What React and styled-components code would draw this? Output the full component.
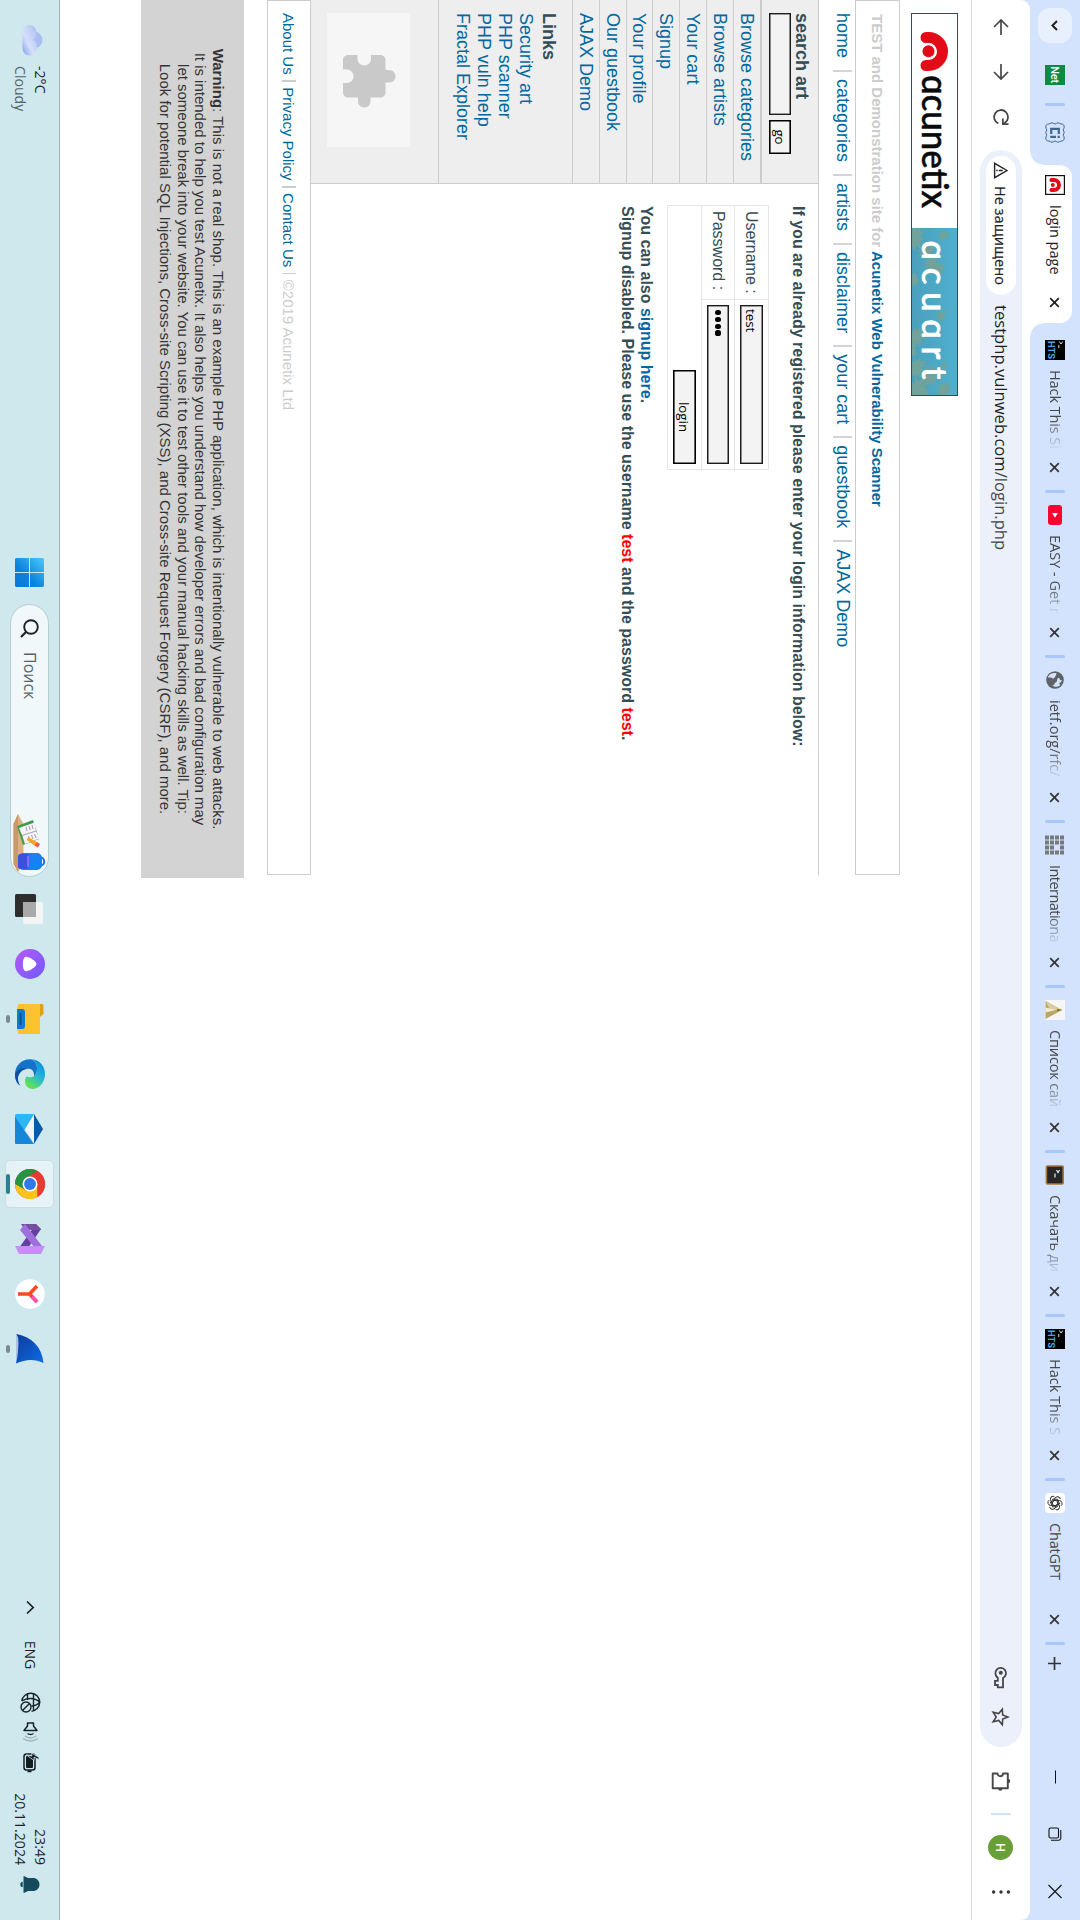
import React from "react";
import styled, { createGlobalStyle, css } from "styled-components";

const ui = `"Open Sans", "Noto Sans", sans-serif`;
const arial = `"Liberation Sans", Arial, sans-serif`;

const Global = createGlobalStyle`
  html, body { margin: 0; padding: 0; background: #fff; }
  * { box-sizing: border-box; }
  svg { display: block; flex: none; }
`;

const Viewport = styled.div`
  width: 1080px;
  height: 1920px;
  overflow: hidden;
`;

/* The desktop is a landscape screen turned a quarter clockwise. */
const Screen = styled.div`
  width: 1920px;
  height: 1080px;
  display: flex;
  flex-direction: column;
  transform-origin: 0 0;
  transform: translateX(1080px) rotate(90deg);
  background: #fff;
  font-family: ${ui};
  color: #1f1f1f;
`;

/* ---------- Browser: tab strip ---------- */

const TabStrip = styled.div`
  height: 50px;
  flex: none;
  display: flex;
  align-items: center;
  background: #d3e3fd;
`;
const TabSearch = styled.div`
  width: 35px;
  height: 34px;
  margin-left: 8px;
  border-radius: 12px;
  background: #e9f0fd;
  display: grid;
  place-items: center;
`;
const PinnedTab = styled.div`
  width: 20px;
  height: 20px;
  margin-left: ${(p) => p.$gap}px;
`;
const Separator = styled.div`
  width: 3px;
  height: 20px;
  flex: none;
  margin-left: ${(p) => p.$gap || 0}px;
  border-radius: 2px;
  background: #a8c7fa;
`;
const Favicon = styled.div`
  width: 20px;
  height: 20px;
  flex: none;
  display: grid;
  place-items: center;
`;
const TabTitle = styled.div`
  flex: 1;
  margin: 0 12px 0 10px;
  overflow: hidden;
  white-space: pre;
  font-size: 14.5px;
  line-height: 24px;
  letter-spacing: ${(p) => p.$track || 0}px;
  color: ${(p) => (p.$active ? "#1f1f1f" : "#474747")};
  ${(p) =>
    p.$fade &&
    css`
      mask-image: linear-gradient(90deg, #000 60%, transparent 100%);
    `}
`;
const ActiveTab = styled.div`
  width: 158px;
  height: 42px;
  margin: 8px 0 0 23px;
  padding: 0 14px 8px 10px;
  display: flex;
  align-items: center;
  position: relative;
  background: #fff;
  border-radius: 12px 12px 0 0;
  &::before,
  &::after {
    content: "";
    position: absolute;
    bottom: 0;
    width: 14px;
    height: 14px;
  }
  &::before {
    left: -14px;
    background: radial-gradient(circle at 0 0, transparent 13.5px, #fff 14px);
  }
  &::after {
    right: -14px;
    background: radial-gradient(circle at 100% 0, transparent 13.5px, #fff 14px);
  }
`;
const Tab = styled.div`
  width: ${(p) => p.$width}px;
  height: 42px;
  padding-left: 12px;
  display: flex;
  align-items: center;
  flex: none;
`;
const Tabs = styled.div`
  display: flex;
  margin-left: 5px;
`;
const TabClose = styled.div`
  width: 11px;
  height: 11px;
  flex: none;
  margin-right: ${(p) => p.$after || 0}px;
`;
const NewTab = styled.div`
  margin-left: 11px;
`;
const WindowButtons = styled.div`
  margin-left: auto;
  margin-right: 21px;
  display: flex;
  align-items: center;
  gap: 43px;
`;

/* ---------- Browser: toolbar ---------- */

const ToolbarBack = styled.div`
  flex: none;
  background: #d3e3fd;
`;
const Toolbar = styled.div`
  height: 59px;
  display: flex;
  align-items: center;
  padding-left: 17px;
  background: #fff;
  border-bottom: 1px solid #dcdde0;
  border-radius: 9px 9px 0 0;
`;
const NavButtons = styled.div`
  display: flex;
  gap: 25px;
`;
const AddressBar = styled.div`
  width: 1597px;
  height: 42px;
  margin-left: 23px;
  padding: 0 20px 0 6px;
  display: flex;
  align-items: center;
  border-radius: 21px;
  background: #ebf0fa;
`;
const SecurityChip = styled.div`
  width: 139px;
  height: 30px;
  padding-left: 6px;
  display: flex;
  align-items: center;
  gap: 7px;
  border-radius: 15px;
  background: #fff;
  font-size: 14.5px;
  font-weight: 500;
  -webkit-text-stroke: 0.2px #1f1f1f;
  white-space: pre;
`;
const Url = styled.div`
  flex: 1;
  margin-left: 10px;
  font-size: 16.6px;
  line-height: 24px;
  color: #1f1f1f;
  span {
    color: #474747;
  }
`;
const AddressIcons = styled.div`
  display: flex;
  align-items: center;
  gap: 18px;
`;
const ToolbarSep = styled.div`
  width: 2px;
  height: 20px;
  margin: 0 20px 0 20px;
  background: #cfe0fb;
`;
const ExtensionsSlot = styled.div`
  margin-left: 24px;
`;
const Avatar = styled.div`
  width: 25px;
  height: 25px;
  border-radius: 50%;
  background: #689f38;
  color: #fff;
  font: 500 12.5px/25px Roboto, sans-serif;
  text-align: center;
`;
const MenuSlot = styled.div`
  margin-left: 30px;
`;

/* ---------- Web page ---------- */

const Page = styled.main`
  height: 911px;
  flex: none;
  display: flex;
  flex-direction: column;
  background: #fff;
  font-family: ${arial};
  color: #334d55;
`;
const Logo = styled.div`
  margin: 13px 0 11px 13px;
  height: 47px;
  flex: none;
`;
const Masthead = styled.h1`
  width: 875px;
  height: 45px;
  margin: 0;
  padding-left: 13px;
  flex: none;
  border: 1px solid #ccc;
  font-size: 15px;
  line-height: 43px;
  font-weight: 700;
  color: #ccc;
  white-space: pre;
`;
const Link = styled.a`
  color: #0068a0;
  text-decoration: none;
`;
const GlobalNav = styled.nav`
  height: 36px;
  padding: 0 0 11px 13px;
  flex: none;
  display: flex;
  align-items: center;
  font-size: 18px;
  line-height: 25px;
  white-space: pre;
`;
const NavItem = styled.div`
  display: flex;
  align-items: center;
  &:not(:last-child)::after {
    content: "";
    width: 2px;
    height: 19px;
    margin: 0 7px 0 12px;
    background: #d2d4d8;
  }
`;
const Columns = styled.div`
  width: 875px;
  height: 508px;
  flex: none;
  display: flex;
  border-top: 1px solid #ccc;
`;
const Sidebar = styled.aside`
  width: 184px;
  flex: none;
  border-right: 1px solid #ccc;
  background: #eee;
  font-size: 18px;
  white-space: pre;
`;
const SearchBlock = styled.div`
  height: 58px;
  padding: 5px 0 0 13px;
  border-bottom: 2px solid #ccc;
`;
const SideTitle = styled.h3`
  margin: 0;
  font-size: 18px;
  line-height: 22px;
  font-weight: 700;
`;
const SearchRow = styled.div`
  display: flex;
  gap: 5px;
`;
const Field = styled.div`
  width: ${(p) => p.$width}px;
  height: ${(p) => p.$height}px;
  padding-left: ${(p) => (p.$center ? 0 : 3)}px;
  display: flex;
  align-items: center;
  justify-content: ${(p) => (p.$center ? "center" : "flex-start")};
  border: 1px solid ${(p) => (p.$center ? "#000" : "#1c1c1c")};
  box-shadow: inset 0 0 0 0.6px ${(p) => (p.$center ? "#000" : "#444")};
  background: #f3f3f3;
  color: #000;
  font: 13.3px/18px ${ui};
`;
const SideItem = styled.div`
  height: 26.9px;
  padding-left: 13px;
  border-bottom: 1px solid #ccc;
  line-height: 26px;
`;
const LinksBlock = styled.div`
  height: 133.7px;
  padding: 12px 0 0 13px;
  border-bottom: 1px solid #ccc;
  line-height: 21px;
`;
const LinksTitle = styled(SideTitle)`
  margin-bottom: 2px;
`;
const PluginBox = styled.div`
  width: 134px;
  height: 83px;
  margin: 28px 0 0 13px;
  padding-top: 1px;
  display: grid;
  place-items: center;
  background: #f6f6f6;
`;
const Main = styled.section`
  padding-left: 22px;
  white-space: pre;
`;
const Story = styled.div`
  font-size: 16px;
  font-weight: 700;
  line-height: ${(p) => p.$line}px;
`;
const LoginForm = styled.div`
  width: 265px;
  height: 102px;
  margin: 9px 0 11px -1px;
  display: grid;
  grid-template-columns: 94px 171px;
  grid-template-rows: 34px 33px 35px;
  border: 1px solid #e6e6e6;
  font-size: 16px;
`;
const Cell = styled.div`
  grid-column: ${(p) => (p.$wide ? "1 / 3" : "auto")};
  display: flex;
  align-items: center;
  justify-content: ${(p) => (p.$wide ? "flex-end" : "flex-start")};
  padding: ${(p) => (p.$wide ? "0 7px 2px 0" : "0 0 0 5px")};
  border-bottom: ${(p) => (p.$wide ? 0 : 1)}px solid #e6e6e6;
  border-right: ${(p) => (p.$label ? 1 : 0)}px solid #e6e6e6;
`;
const Dots = styled.div`
  display: flex;
  gap: 1.6px;
  padding-left: 1px;
  i {
    width: 5.2px;
    height: 5.2px;
    border-radius: 50%;
    background: #000;
  }
`;
const Red = styled.span`
  color: #f00;
`;
const SiteInfo = styled.footer`
  width: 875px;
  height: 44px;
  padding-left: 12px;
  flex: none;
  display: flex;
  align-items: center;
  border: 1px solid #ccc;
  font-size: 15px;
  color: #ccc;
  white-space: pre;
`;
const InfoSep = styled.div`
  width: 1.5px;
  height: 14px;
  margin: 0 5.5px;
  background: #ccc;
`;
const Warning = styled.div`
  width: 878px;
  height: 103px;
  margin-top: 23px;
  padding-top: 17px;
  flex: none;
  background: #d3d3d3;
  color: #333;
  font-size: 15px;
  line-height: 17.5px;
  text-align: center;
  white-space: pre;
`;
const WarningLine = styled.div`
  letter-spacing: ${(p) => p.$track || 0}px;
`;

/* ---------- Taskbar ---------- */

const Taskbar = styled.footer`
  height: 60px;
  flex: none;
  display: flex;
  align-items: center;
  background: #cfe8ee;
  box-shadow: inset 0 1px #9fb5ba;
`;
const Weather = styled.div`
  width: 558px;
  padding: 0 0 1px 25px;
  display: flex;
  align-items: center;
  gap: 10px;
  white-space: pre;
  font-size: 14.1px;
  line-height: 20px;
  svg {
    margin-bottom: 4px;
  }
  div div:last-child {
    color: #566468;
  }
`;
const SearchPill = styled.div`
  width: 273px;
  height: 39px;
  margin: 0 4px 0 17px;
  padding: 0 4px 0 14px;
  display: flex;
  align-items: center;
  border: 1px solid #b4cdd3;
  border-radius: 20px;
  background: #f0f8fa;
  font-size: 16px;
  color: #5a6265;
`;
const SearchLabel = styled.div`
  flex: 1;
  margin-left: 14px;
`;
const AppSlot = styled.div`
  width: 55px;
  height: 60px;
  display: flex;
  align-items: center;
  justify-content: center;
  position: relative;
  &::after {
    content: "";
    position: absolute;
    bottom: 6px;
    width: ${(p) => (p.$state === "active" ? 20 : p.$state === "open" ? 8 : 0)}px;
    height: 4px;
    border-radius: 2px;
    background: ${(p) => (p.$state === "active" ? "#25818d" : "#788b8f")};
  }
`;
const AppPlate = styled.div`
  width: 48px;
  height: 49px;
  display: grid;
  place-items: center;
  border-radius: 5px;
  background: ${(p) => (p.$on ? "#e5f3f7" : "transparent")};
  border: 1px solid ${(p) => (p.$on ? "#c9dde2" : "transparent")};
`;
const Tray = styled.div`
  margin-left: auto;
  padding: 0 27px 1px 0;
  display: flex;
  align-items: center;
  font-size: 14px;
`;
const TrayItem = styled.div`
  margin-left: ${(p) => p.$gap}px;
`;
const Clock = styled.div`
  margin-left: 20px;
  margin-right: 11px;
  text-align: right;
  line-height: 20px;
  font-size: 14.1px;
`;

/* ---------- Icons ---------- */

const Close = ({ color = "#333" }) => (
  <svg width="11" height="11" viewBox="0 0 11 11">
    <path d="M1.2 1.2 9.8 9.8M9.8 1.2 1.2 9.8" stroke={color} strokeWidth="1.7" />
  </svg>
);
const AcuFav = () => (
  <svg width="20" height="20" viewBox="0 0 20 20">
    <rect x=".6" y=".6" width="18.8" height="18.8" fill="#fff" stroke="#111" strokeWidth="1.2" />
    <path d="M5 13.6V11a5 5 0 0 1 10 0v2.6" fill="none" stroke="#e30b17" strokeWidth="3.9" strokeLinecap="round" />
    <circle cx="10" cy="12.2" r="2" fill="#e30b17" />
  </svg>
);
const HtsFav = () => (
  <svg width="20" height="20" viewBox="0 0 20 20">
    <rect width="20" height="20" fill="#000" />
    <path d="M1.5 2.2 4 4 1.5 5.6M5 6.2h3" fill="none" stroke="#ddd" strokeWidth="1" />
    <text x="1" y="16.8" fontSize="9.4" fontWeight="700" fontFamily="Roboto, sans-serif" textLength="18" fill="#4aa8e8">HTS</text>
  </svg>
);
const YtFav = () => (
  <svg width="20" height="20" viewBox="0 0 20 20">
    <rect y="3" width="20" height="14" rx="3" fill="#ff0033" />
    <path d="M8 7.2 12.8 10 8 12.8z" fill="#fff" />
  </svg>
);
const GlobeFav = () => (
  <svg width="20" height="20" viewBox="0 0 20 20">
    <circle cx="10" cy="10" r="8.8" fill="#5f6368" />
    <path d="M3 8.500c2.400.2 4 1.500 5.200 2.600.8.800.3 2-.7 2.300v3.800C4.800 16.200 2.600 13.500 3 8.500zM10.200 3c.2 1.600-.4 2.300-2 2.600-.6 1.400 0 2 1.400 2.200 2 .2 3 .6 3.200 2.400 1.800.2 2.600.8 2.800 2.600 1.800-2.600 1.600-6-.6-8.200-.6 1-1.600 1.300-2.300.7-.6-.6-.4-1.500-2.500-2.300z" fill="#d3e3fd" />
  </svg>
);
const GridFav = () => (
  <svg width="20" height="20" viewBox="0 0 20 20">
    {[0, 1, 2, 3].map((r) =>
      [0, 1, 2, 3].map((c) =>
        r === 1 && c === 2 ? null : <rect key={`${r}${c}`} x={0.5 + c * 5} y={1 + r * 5} width="4" height="4" fill="#77797c" />
      )
    )}
  </svg>
);
const ArrowFav = () => (
  <svg width="20" height="20" viewBox="0 0 20 20">
    <rect width="20" height="20" fill="#f6f6f4" />
    <path d="M10 3 1 19.500h18z" fill="#b9a566" />
    <path d="M10 3v12L1 19.500z" fill="#d9cd9b" />
    <path d="M10 9 7.500 19.500h5z" fill="#f0ead0" />
    <path d="M10 2.500 8.700 8h2.600z" fill="#8a742c" />
  </svg>
);
const TermFav = () => (
  <svg width="20" height="20" viewBox="0 0 20 20">
    <rect x="1" y="1.800" width="18" height="16.800" rx="1" fill="#262626" stroke="#a8793f" strokeWidth="1.600" />
    <path d="M5 5.500 7.500 7 5 8.500M8.500 10h4" fill="none" stroke="#eee" strokeWidth="1.200" />
  </svg>
);
const GptFav = () => (
  <svg width="20" height="20" viewBox="0 0 20 20">
    <rect width="20" height="20" rx="4" fill="#fff" />
    <g fill="none" stroke="#333" strokeWidth="1">
      {[0, 60, 120, 180, 240, 300].map((a) => (
        <path key={a} transform={`rotate(${a} 10 10)`} d="M7.500 10V5.700a3 3 0 0 1 5.300-1.700M7.500 8.500 11.200 6.400l3.400 2" />
      ))}
    </g>
  </svg>
);
const NetFav = () => (
  <svg width="20" height="20" viewBox="0 0 20 20">
    <rect width="20" height="20" fill="#0a8a43" />
    <text x="1.200" y="14.200" fontSize="11" fontFamily="Roboto, sans-serif" fontWeight="500" textLength="17" fill="#fff">Net</text>
  </svg>
);
const CiFav = () => (
  <svg width="21" height="20" viewBox="0 0 21 20">
    <g fill="none" stroke="#3f6590">
      <path d="M5 .8c-2 0-3 1-3 3 0 1.500-1.300 2-1.300 3.200S2 8.700 2 10s-1.300 1.800-1.300 3S2 14.700 2 16.200c0 2 1 3 3 3 1.500 0 2-.9 3-.9s1.500.9 2.500.9 1.500-.9 2.500-.9 1.500.9 3 .9c2 0 3-1 3-3 0-1.500 1.300-2 1.300-3.200S19 11.300 19 10s1.300-1.800 1.300-3S19 5.300 19 3.800c0-2-1-3-3-3-1.500 0-2 .9-3 .9s-1.500-.9-2.500-.9-1.500.9-2.500.9-1.500-.9-3-.9z" strokeWidth="1" />
      <path d="M12 6.200H6.800v7.600H12" strokeWidth="2.200" />
      <path d="M14.800 9v5.800M14.800 5.200v2.200" strokeWidth="2.200" />
    </g>
  </svg>
);
const Arrow = ({ flip }) => (
  <svg width="20" height="20" viewBox="0 0 20 20">
    <path
      d={flip ? "M2 10h14.500M10 3l7 7-7 7" : "M18 10H3.500M10 3 3 10l7 7"}
      fill="none" stroke="#474747" strokeWidth="1.700"
    />
  </svg>
);
const Reload = () => (
  <svg width="20" height="20" viewBox="0 0 20 20">
    <path d="M16.500 12.600A7 7 0 1 1 15.800 6L17 7.800" fill="none" stroke="#474747" strokeWidth="1.800" />
    <path d="M17.200 2.500v5.600h-5.600" fill="none" stroke="#474747" strokeWidth="1.800" />
  </svg>
);
const WarnIcon = () => (
  <svg width="17" height="16" viewBox="0 0 17 16">
    <path d="M8.500 2 1.300 14.400h14.400z" fill="none" stroke="#222" strokeWidth="1.400" />
    <path d="M8.500 6.300v4M8.500 11.300v1.500" stroke="#222" strokeWidth="1.400" />
  </svg>
);
const KeyIcon = () => (
  <svg width="23" height="15" viewBox="0 0 23 15">
    <path d="M12 5H21.300V10.200H19V13H14.800V10.200H11.700A5.300 5.300 0 1 1 12 5z" fill="none" stroke="#474747" strokeWidth="1.800" />
    <circle cx="6.800" cy="7.200" r="2" fill="#474747" />
  </svg>
);
const StarIcon = () => (
  <svg width="20" height="19" viewBox="0 0 20 19">
    <path d="M10 2 12.100 7.300l5.700.4-4.400 3.600 1.400 5.500L10 13.800l-4.800 3 1.400-5.500L2.200 7.700l5.700-.4z" fill="none" stroke="#474747" strokeWidth="1.600" />
  </svg>
);
const ExtIcon = () => (
  <svg width="22" height="22" viewBox="0 0 22 22">
    <path d="M2.500 4.200H17.200V10.500 19.300H2.500V14.500A2.500 2.500 0 0 0 2.500 9z" fill="none" stroke="#474747" strokeWidth="1.900" strokeLinejoin="round" />
    <path d="M7.800 4a2.200 2.200 0 0 1 4.400 0zM17.500 9.500a2.200 2.200 0 0 1 0 4.400z" fill="#474747" />
  </svg>
);
const DotsIcon = () => (
  <svg width="4" height="20" viewBox="0 0 4 20">
    <g fill="#333">
      <circle cx="2" cy="2.600" r="1.700" />
      <circle cx="2" cy="10" r="1.700" />
      <circle cx="2" cy="17.400" r="1.700" />
    </g>
  </svg>
);

const ragged = (x, y, s, r) => (
  <path
    transform={`translate(${x} ${y}) rotate(${r}) scale(${s})`}
    d="M0 0l3-5 1 3 4-6-1 6 5-3-2 5 6 0-4 3 5 4-6-1 2 6-5-3 0 6-4-4-2 5-1-6-5 3 2-5-6 0 4-3-5-4 6 0-2-5z"
  />
);
const AcuLogo = () => (
  <svg width="383" height="47" viewBox="0 0 383 47">
    <rect x=".500" y=".500" width="382" height="46" fill="#fff" stroke="#2f4f57" />
    <defs>
      <linearGradient id="sea" x1="0" y1="1" x2="0" y2="0">
        <stop offset="0" stopColor="#4aa0bd" />
        <stop offset="1" stopColor="#4fb0cd" />
      </linearGradient>
      <clipPath id="seaClip"><rect x="215" y="1" width="167" height="45" /></clipPath>
    </defs>
    <rect x="215" y="1" width="167" height="45" fill="url(#sea)" />
    <g clipPath="url(#seaClip)" fill="#6fa39b">
      {ragged(222, 38, 1.1, 20)}
      {ragged(224, 12, 0.5, 80)}
      {ragged(238, 27, 0.8, 50)}
      {ragged(250, 22, 0.8, 10)}
      {ragged(256, 16, 0.6, 40)}
      {ragged(264, 42, 0.6, 0)}
      {ragged(302, 14, 0.5, 30)}
      {ragged(325, 36, 0.9, 60)}
      {ragged(335, 44, 0.8, 15)}
      {ragged(352, 12, 0.35, 15)}
      {ragged(354, 36, 0.9, 35)}
      {ragged(366, 22, 1, 75)}
      {ragged(374, 34, 1.2, 5)}
      {ragged(377, 10, 0.7, 50)}
    </g>
    <rect x=".500" y=".500" width="382" height="46" fill="none" stroke="#2f4f57" />
    <path d="M24.500 32V29.500a14 14 0 0 1 28 0V32" fill="none" stroke="#e30b17" strokeWidth="11" strokeLinecap="round" />
    <circle cx="38.300" cy="29.500" r="8" fill="#fff" />
    <circle cx="38.300" cy="29.500" r="6" fill="#e30b17" />
    <text x="62" y="36" fontFamily="Lato, sans-serif" fontWeight="500" fontSize="36" textLength="133" lengthAdjust="spacingAndGlyphs" stroke="#0a0a0a" strokeWidth=".5" fill="#0a0a0a">ɑcunetix</text>
    <text x="227.500" y="36" fontFamily="Lato, sans-serif" fontWeight="500" fontSize="35" textLength="139" stroke="#fff" strokeWidth=".6" fill="#fff">ɑcuɑrt</text>
  </svg>
);

const Puzzle = () => (
  <svg width="60" height="60" viewBox="0 0 24 24">
    <path fill="#c9c9c9" d="M20.500 11H19V7c0-1.100-.9-2-2-2h-4V3.500C13 2.120 11.880 1 10.500 1S8 2.120 8 3.500V5H4c-1.100 0-1.990.9-1.990 2v3.800H3.500c1.490 0 2.700 1.210 2.700 2.700s-1.210 2.700-2.700 2.700H2V20c0 1.100.9 2 2 2h3.800v-1.500c0-1.490 1.210-2.700 2.700-2.700s2.700 1.210 2.700 2.700V22H17c1.100 0 2-.9 2-2v-4h1.500c1.380 0 2.500-1.120 2.500-2.500S21.880 11 20.500 11z" />
  </svg>
);

const Cloud = () => (
  <svg width="31" height="21" viewBox="0 0 31 21">
    <defs>
      <linearGradient id="cl" x1="0" y1="0" x2="1" y2="1">
        <stop offset="0" stopColor="#a9bdf0" />
        <stop offset=".6" stopColor="#d5e0fb" />
        <stop offset="1" stopColor="#7f9fe8" />
      </linearGradient>
    </defs>
    <circle cx="15" cy="9" r="8.500" fill="#a9bff3" />
    <path d="M7 6.500c4 0 7 2 8 4 1-3 4-5 8-4.500 4 .5 7.500 3.500 7.500 7.500S27 20.500 23 20.500H7a7 7 0 0 1 0-14z" fill="url(#cl)" />
  </svg>
);
const WinLogo = () => (
  <svg width="29" height="29" viewBox="0 0 29 29">
    <defs>
      <linearGradient id="wn" x1="0" y1="0" x2="29" y2="29" gradientUnits="userSpaceOnUse">
        <stop offset="0" stopColor="#4cc9fb" />
        <stop offset=".6" stopColor="#0a84dc" />
        <stop offset="1" stopColor="#0875d4" />
      </linearGradient>
    </defs>
    <path fill="url(#wn)" d="M1 0h13v14H0V1zM15 0h13l1 1v13H15zM0 15h14v14H1l-1-1zM15 15h14v13l-1 1H15z" />
  </svg>
);
const Magnifier = () => (
  <svg width="19" height="19" viewBox="0 0 19 19">
    <circle cx="8" cy="8" r="6.800" fill="none" stroke="#1d2326" strokeWidth="1.900" />
    <path d="m13 13 5 5" stroke="#1d2326" strokeWidth="2.200" />
  </svg>
);
const SchoolArt = () => (
  <svg width="58" height="35" viewBox="0 0 58 35">
    <path d="M0 29 10 23.500H50L58 29 50 33.500H10z" fill="#dcb283" />
    <path d="M10 33.500H50L58 29H0z" fill="#c89a68" />
    <path d="M6 14 25 8 31 24 12 30z" fill="#3f9b50" />
    <path d="M8.500 12.500 17 11 24.500 7.500 30 22 21 25 14 28z" fill="#f7f3f8" />
    <path d="M17 11 21.500 25M11 15l4-1M12 18l4-1M13 21l4-1M20 12.500l4-1.500M21 15.500l4-1.500M22 18.500l4-1.500" stroke="#8d86a8" strokeWidth=".8" />
    <path d="M23 19 28.500 9.500 32 12 26 20z" fill="#f5a623" />
    <path d="M28 10 30 7l3.500 2L31.500 12.500z" fill="#ef5a50" />
    <path d="M43 8C43 1 52 1 52 8" fill="none" stroke="#1b6fe6" strokeWidth="2" />
    <rect x="39" y="5" width="17" height="24" rx="5" fill="#1680f5" />
    <rect x="40" y="18" width="15" height="11" rx="3" fill="#3b4fe0" />
    <path d="M42 19h11" stroke="#8f7bff" strokeWidth="1.500" />
  </svg>
);
const TaskView = () => (
  <svg width="30" height="29" viewBox="0 0 30 29">
    <rect x="0" y="8" width="23" height="21" rx="1.500" fill="#2d2d2d" />
    <rect x="8" y="1" width="22" height="20" rx="1.500" fill="#f3f4f4" />
    <path d="M8 8h15v13H8z" fill="#a9a9a9" />
  </svg>
);
const Alice = () => (
  <svg width="30" height="30" viewBox="0 0 30 30">
    <defs>
      <linearGradient id="al" x1="0" y1="1" x2="1" y2="0">
        <stop offset="0" stopColor="#b958fb" />
        <stop offset="1" stopColor="#6c5cfb" />
      </linearGradient>
    </defs>
    <circle cx="15" cy="15" r="15" fill="url(#al)" />
    <path d="M15 8.500c3 0 8.500 9 7 11.500-1.500 2.800-12.500 2.800-14 0C6.500 17.500 12 8.500 15 8.500z" fill="#fff" />
  </svg>
);
const Folder = () => (
  <svg width="30" height="28" viewBox="0 0 30 28">
    <path d="M0 2q0-1.500 1.500-1.500H10L13 4H0z" fill="#e0a010" />
    <path d="M0 4h30v20.500a2 2 0 0 1-2 2H2a2 2 0 0 1-2-2z" fill="#fdc32f" />
    <path d="M5 27v-5a3 3 0 0 1 3-3h14a3 3 0 0 1 3 3v5z" fill="#1279cf" />
    <path d="M9 23.500h12" stroke="#0b4f93" strokeWidth="1.800" />
  </svg>
);
const Edge = () => (
  <svg width="30" height="30" viewBox="0 0 30 30">
    <defs>
      <linearGradient id="ed" x1="0" y1="0" x2="1" y2=".5">
        <stop offset="0" stopColor="#0c7fd8" />
        <stop offset=".55" stopColor="#20b3df" />
        <stop offset="1" stopColor="#5fe05a" />
      </linearGradient>
    </defs>
    <path d="M.3 13C1 5 7.500 0 15 0c8.500 0 15 6 15 12.500 0 5-4 7.500-8 7.500-3.500 0-5-1.300-4.500-2.500.8-1 1-2 .8-3.500C17.800 10 14 8 10 8 5.500 8 2 10 .3 13z" fill="url(#ed)" />
    <path d="M.2 14C1.500 10 5.500 8 10 8c3 0 5.500 1 7 3-6-.5-8 3.500-7 8 1 4.500 5 7.500 9 8 3 .3 5.500-.5 7.500-2C24 28.500 20 30 15 30 6.500 30-.5 23 .2 14z" fill="#1473c8" />
    <path d="M10 18.500c.5 6 6 9.500 11 8.500 2.500-.5 4.500-1.300 6-2.500C24 29 19.500 30 15 30 11 28 8 23 10 18.500z" fill="#124d99" />
  </svg>
);
const Mail = () => (
  <svg width="30" height="29" viewBox="0 0 30 29">
    <path d="M0 10 15 1l15 9z" fill="#0a5aa8" />
    <path d="M1 10h28L15 19z" fill="#f4f4f4" />
    <path d="M0 10v17.500Q0 29 1.500 29h27Q30 29 30 27.500L15 19z" fill="#2cb7f3" />
    <path d="M30 10v17.500Q30 29 28.500 29H3z" fill="#1587d8" />
  </svg>
);
const Chrome = () => (
  <svg width="30" height="30" viewBox="0 0 48 48">
    <circle cx="24" cy="24" r="24" fill="#e53b30" />
    <path d="M3.200 12A24 24 0 0 0 24 48L34.400 30 24 24 13.600 30z" fill="#259443" />
    <path d="M24 48A24 24 0 0 0 44.800 12H24l10.400 18z" fill="#fcc31c" />
    <path d="M3.200 12 13.600 30 24 12h20.800A24 24 0 0 0 3.200 12z" fill="#e53b30" />
    <circle cx="24" cy="24" r="12" fill="#fff" />
    <circle cx="24" cy="24" r="9.500" fill="#3079ea" />
  </svg>
);
const VisualStudio = () => (
  <svg width="30" height="30" viewBox="0 0 30 30">
    <path d="M0 9 5 4 30 21 24 26z" fill="#643f9f" />
    <path d="M0 9 6 4v16L0 24z" fill="#74509f" />
    <path d="M0 20 22 3l2 7L6 25z" fill="#9f6fdb" />
    <path d="M22 0 30 4v22l-8 4z" fill="#c88cf5" />
  </svg>
);
const Yandex = () => (
  <svg width="30" height="30" viewBox="0 0 30 30">
    <circle cx="15" cy="15" r="14.800" fill="#fff" />
    <path d="M7 8l8 7.500L23 8M15 15v12" fill="none" stroke="#fb4a20" strokeWidth="3.600" />
    <path d="M17.500 13 23 8" stroke="#ff4fb0" strokeWidth="3.600" />
  </svg>
);
const Wireshark = () => (
  <svg width="30" height="29" viewBox="0 0 30 29">
    <defs>
      <linearGradient id="ws" x1="0" y1="1" x2="1" y2="0">
        <stop offset="0" stopColor="#0b3d9c" />
        <stop offset="1" stopColor="#0f6ae4" />
      </linearGradient>
    </defs>
    <path d="M0 27.500C3 12 13 2 29 .500c-4 8-4.500 17 .5 27.500z" fill="url(#ws)" />
    <path d="M0 28c3-3 6-2 9-2.500 7 .5 13 .5 20.500 2.500z" fill="#a9c4e6" />
  </svg>
);
const Caret = ({ up }) => (
  <svg width="15" height="9" viewBox="0 0 15 9">
    <path d={up ? "M1.500 8 7.500 1.800 13.500 8" : "M3 2l4.500 4.500L12 2"} fill="none" stroke="#1f1f1f" strokeWidth={up ? 1.7 : 2} />
  </svg>
);
const NoNet = () => (
  <svg width="21" height="21" viewBox="0 0 21 21" fill="none" stroke="#16242a" strokeWidth="1.400">
    <path d="M9 19.200A9 9 0 1 1 19.200 9.500M1.500 7.500h17.500M1.500 13.500H8M9 19C5.500 14 5.500 6 10.300 1.200 13 4 14 6.500 14 9.500" />
    <circle cx="15" cy="15" r="5" />
    <path d="m11.500 11.500 7 7" />
  </svg>
);
const Speaker = () => (
  <svg width="20" height="19" viewBox="0 0 20 19" fill="none">
    <path d="M1 6.500h3L8.500 3v13L4 12.500H1z" stroke="#16242a" strokeWidth="1.500" strokeLinejoin="round" />
    <path d="M11.500 6.500q2 3 0 6" stroke="#16242a" strokeWidth="1.400" />
    <path d="M14 4q4 5.500 0 11M16.500 2q5 7.500 0 15" stroke="#9db5ba" strokeWidth="1.300" />
  </svg>
);
const Battery = () => (
  <svg width="21" height="18" viewBox="0 0 21 18">
    <rect x="2" y="4" width="16" height="11" rx="2.500" fill="none" stroke="#111c20" strokeWidth="1.500" />
    <rect x="4" y="6" width="12" height="7" rx="1" fill="#111c20" />
    <path d="M18.500 7.500h1.800v4h-1.800z" fill="#111c20" />
    <path d="M5.500 0 1 7.200h3L3 12.500 8.500 5H5.200L7.500 0z" fill="#111c20" stroke="#cfe8ee" strokeWidth=".8" />
  </svg>
);
const Bell = () => (
  <svg width="17" height="20" viewBox="0 0 17 20">
    <path d="M8.500.5C4.500.5 2 3.500 2 7v5L.300 15.500V16.500H16.700V15.500L15 12V7C15 3.500 12.500.5 8.500.5zM5.800 17.300h5.400a2.700 2.400 0 0 1-5.400 0z" fill="#144a5c" />
  </svg>
);

/* ---------- Data ---------- */

const tabs = [
  { icon: <HtsFav />, title: "Hack This Si", track: -0.1 },
  { icon: <YtFav />, title: "EASY - Get r" },
  { icon: <GlobeFav />, title: "ietf.org/rfc/" },
  { icon: <GridFav />, title: "Internationa", track: -0.55 },
  { icon: <ArrowFav />, title: "Список сай", track: -0.15 },
  { icon: <TermFav />, title: "Скачать ди", track: -0.15 },
  { icon: <HtsFav />, title: "Hack This S" },
  { icon: <GptFav />, title: "ChatGPT", full: true, track: -0.2 },
];
const navLinks = ["home", "categories", "artists", "disclaimer", "your cart", "guestbook", "AJAX Demo"];
const sideLinks = ["Browse categories", "Browse artists", "Your cart", "Signup", "Your profile", "Our guestbook", "AJAX Demo"];
const outLinks = ["Security art", "PHP scanner", "PHP vuln help", "Fractal Explorer"];
const apps = [
  { icon: <TaskView /> },
  { icon: <Alice /> },
  { icon: <Folder />, state: "open" },
  { icon: <Edge /> },
  { icon: <Mail /> },
  { icon: <Chrome />, state: "active" },
  { icon: <VisualStudio /> },
  { icon: <Yandex /> },
  { icon: <Wireshark />, state: "open" },
];

export default function App() {
  return (
    <>
      <Global />
      <Viewport>
        <Screen>
          <TabStrip>
            <TabSearch><Caret /></TabSearch>
            <PinnedTab $gap={22}><NetFav /></PinnedTab>
            <Separator $gap={18} />
            <PinnedTab $gap={16}><CiFav /></PinnedTab>
            <ActiveTab>
              <Favicon><AcuFav /></Favicon>
              <TabTitle $active>login page</TabTitle>
              <TabClose $after={1}><Close color="#1f1f1f" /></TabClose>
            </ActiveTab>
            <Tabs>
              {tabs.map((t, i) => (
                <Tab key={i} $width={i < 5 ? 165 : 164}>
                  <Favicon>{t.icon}</Favicon>
                  <TabTitle $fade={!t.full} $track={t.track}>{t.title}</TabTitle>
                  <TabClose $after={17}><Close /></TabClose>
                  <Separator />
                </Tab>
              ))}
            </Tabs>
            <NewTab>
              <svg width="15" height="15" viewBox="0 0 15 15">
                <path d="M7.500 1v13M1 7.500h13" stroke="#333" strokeWidth="1.700" />
              </svg>
            </NewTab>
            <WindowButtons>
              <svg width="14" height="14" viewBox="0 0 14 14"><path d="M.500 6.500h13" stroke="#111" /></svg>
              <svg width="14" height="14" viewBox="0 0 14 14" fill="none" stroke="#111" strokeWidth="1.100">
                <rect x="1" y="3.500" width="10" height="9.500" rx="1.500" />
                <path d="M3 1.200H11a2.200 2.200 0 0 1 2.200 2.200V11" />
              </svg>
              <svg width="15" height="14" viewBox="0 0 15 14"><path d="M1 .500 14 13.500M14 .500 1 13.500" stroke="#111" strokeWidth="1.100" /></svg>
            </WindowButtons>
          </TabStrip>

          <ToolbarBack>
            <Toolbar>
              <NavButtons><Arrow /><Arrow flip /><Reload /></NavButtons>
              <AddressBar>
                <SecurityChip><WarnIcon />Не защищено</SecurityChip>
                <Url>testphp.vulnweb.com<span>/login.php</span></Url>
                <AddressIcons><KeyIcon /><StarIcon /></AddressIcons>
              </AddressBar>
              <ExtensionsSlot><ExtIcon /></ExtensionsSlot>
              <ToolbarSep />
              <Avatar>Н</Avatar>
              <MenuSlot><DotsIcon /></MenuSlot>
            </Toolbar>
          </ToolbarBack>

          <Page>
            <Logo><AcuLogo /></Logo>
            <Masthead>TEST and Demonstration site for <Link>Acunetix Web Vulnerability Scanner</Link></Masthead>
            <GlobalNav>
              {navLinks.map((t) => <NavItem key={t}><Link>{t}</Link></NavItem>)}
            </GlobalNav>
            <Columns>
              <Sidebar>
                <SearchBlock>
                  <SideTitle>search art</SideTitle>
                  <SearchRow>
                    <Field $width={102} $height={22} />
                    <Field $width={34} $height={22} $center>go</Field>
                  </SearchRow>
                </SearchBlock>
                {sideLinks.map((t) => <SideItem key={t}><Link>{t}</Link></SideItem>)}
                <LinksBlock>
                  <LinksTitle>Links</LinksTitle>
                  {outLinks.map((t) => <div key={t}><Link>{t}</Link></div>)}
                </LinksBlock>
                <PluginBox><Puzzle /></PluginBox>
              </Sidebar>
              <Main>
                <Story $line={40}>If you are already registered please enter your login information below:</Story>
                <LoginForm>
                  <Cell $label>Username : </Cell>
                  <Cell><Field $width={159} $height={23}>test</Field></Cell>
                  <Cell $label>Password : </Cell>
                  <Cell><Field $width={159} $height={22}><Dots><i /><i /><i /><i /></Dots></Field></Cell>
                  <Cell $wide><Field $width={94} $height={23} $center>login</Field></Cell>
                </LoginForm>
                <Story $line={19}>You can also <Link>signup here</Link>.</Story>
                <Story $line={19.5}>Signup disabled. Please use the username <Red>test</Red> and the password <Red>test</Red>.</Story>
              </Main>
            </Columns>
            <SiteInfo>
              <Link>About Us</Link><InfoSep /><Link>Privacy Policy</Link><InfoSep /><Link>Contact Us</Link><InfoSep />©2019 Acunetix Ltd
            </SiteInfo>
            <Warning>
              <WarningLine><b>Warning</b>: This is not a real shop. This is an example PHP application, which is intentionally vulnerable to web attacks.</WarningLine>
              <WarningLine $track={-0.01}>It is intended to help you test Acunetix. It also helps you understand how developer errors and bad configuration may</WarningLine>
              <WarningLine $track={-0.02}>let someone break into your website. You can use it to test other tools and your manual hacking skills as well. Tip:</WarningLine>
              <WarningLine>Look for potential SQL Injections, Cross-site Scripting (XSS), and Cross-site Request Forgery (CSRF), and more.</WarningLine>
            </Warning>
          </Page>

          <Taskbar>
            <Weather>
              <Cloud />
              <div><div>-2°C</div><div>Cloudy</div></div>
            </Weather>
            <WinLogo />
            <SearchPill>
              <Magnifier />
              <SearchLabel>Поиск</SearchLabel>
              <SchoolArt />
            </SearchPill>
            {apps.map((a, i) => (
              <AppSlot key={i} $state={a.state}>
                <AppPlate $on={a.state === "active"}>{a.icon}</AppPlate>
              </AppSlot>
            ))}
            <Tray>
              <Caret up />
              <TrayItem $gap={26}>ENG</TrayItem>
              <TrayItem $gap={23}><NoNet /></TrayItem>
              <TrayItem $gap={9}><Speaker /></TrayItem>
              <TrayItem $gap={10}><Battery /></TrayItem>
              <Clock><div>23:49</div><div>20.11.2024</div></Clock>
              <Bell />
            </Tray>
          </Taskbar>
        </Screen>
      </Viewport>
    </>
  );
}
